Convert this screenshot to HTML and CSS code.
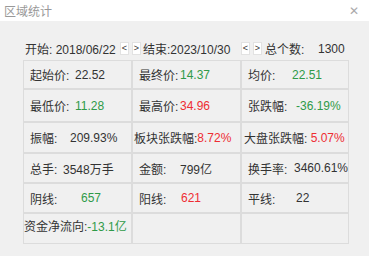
FILE: index.html
```html
<!DOCTYPE html>
<html lang="zh-CN">
<head>
    <meta charset="UTF-8">
    <title>区域统计</title>
    <link rel="stylesheet" href="styles.css">
</head>
<body>
    <div class="titlebar">
        <span class="title">区域统计</span>
        <span class="close">&#x2715;</span>
    </div>

    <div class="range">
        <span class="start">开始: 2018/06/22</span>
        <span class="btn">&lt;</span><span class="btn">&gt;</span>
        <span class="end">结束:2023/10/30</span>
        <span class="btn">&lt;</span><span class="btn">&gt;</span>
        <span class="count">总个数:</span>
        <span class="count-val">1300</span>
    </div>

    <div class="stats">
        <div class="cell"><span class="lbl w45">起始价:</span><span>22.52</span></div>
        <div class="cell"><span class="lbl w41">最终价:</span><span class="up">14.37</span></div>
        <div class="cell"><span class="lbl w44">均价:</span><span class="up">22.51</span></div>

        <div class="cell"><span class="lbl w45">最低价:</span><span class="up">11.28</span></div>
        <div class="cell"><span class="lbl w41">最高价:</span><span class="down">34.96</span></div>
        <div class="cell"><span class="lbl w48">张跌幅:</span><span class="up">-36.19%</span></div>

        <div class="cell"><span class="lbl w40">振幅:</span><span>209.93%</span></div>
        <div class="cell tight"><span class="lbl">板块张跌幅:</span><span class="down">8.72%</span></div>
        <div class="cell tight2"><span class="lbl">大盘张跌幅:</span><span class="down">&nbsp;5.07%</span></div>

        <div class="cell"><span class="lbl w33">总手:</span><span>3548万手</span></div>
        <div class="cell"><span class="lbl w41">金额:</span><span>799亿</span></div>
        <div class="cell"><span class="lbl w48">换手率:</span><span>3460.61%</span></div>

        <div class="cell"><span class="lbl w51">阴线:</span><span class="up">657</span></div>
        <div class="cell"><span class="lbl w42">阳线:</span><span class="down">621</span></div>
        <div class="cell"><span class="lbl w48">平线:</span><span>22</span></div>

        <div class="cell flow"><span class="lbl">资金净流向:</span><span class="up">-13.1亿</span></div>
        <div class="cell"></div>
        <div class="cell"></div>
    </div>
</body>
</html>
```

FILE: styles.css
```css
body {
    margin: 0;
    background: #f0f0f0;
    font-family: "Liberation Sans", "Noto Sans CJK SC", sans-serif;
    font-size: 12px;
    color: #333;
    width: 369px;
    height: 256px;
    overflow: hidden;
}

.titlebar {
    height: 21px;
    background: #fff;
    display: flex;
    align-items: center;
    justify-content: space-between;
    padding: 0 10px 0 4px;
}

.title {
    color: #999;
    font-size: 12px;
}

.close {
    color: #aaa;
    font-size: 12px;
}

.range {
    display: flex;
    align-items: center;
    height: 21px;
    margin-top: 17px;
    padding-left: 25px;
    white-space: nowrap;
}

.start {
    width: 95px;
}

.btn {
    width: 7px;
    height: 11px;
    background: #fff;
    border: 1px solid #e2e2e2;
    font-size: 9px;
    line-height: 11px;
    text-align: center;
    margin-right: 3px;
}

.end {
    width: 98px;
    margin-left: -1px;
}

.count {
    width: 53px;
}

.stats {
    margin: 1px 0 0 23px;
    width: 326px;
    display: grid;
    grid-template-columns: 109px 109px 108px;
    grid-template-rows: 29px 33px 31px 30px 30px 31px;
}

.cell {
    border: 1px solid #dcdcdc;
    display: flex;
    align-items: center;
    padding-left: 6px;
    white-space: nowrap;
    overflow: hidden;
}

.lbl {
    display: inline-block;
}

.w33 { width: 33px; }
.w40 { width: 40px; }
.w41 { width: 41px; }
.w42 { width: 42px; }
.w44 { width: 44px; }
.w45 { width: 45px; }
.w48 { width: 48px; }
.w51 { width: 51px; }

.tight {
    padding-left: 1px;
}

.tight2 {
    padding-left: 2px;
}

.flow {
    padding-left: 0;
    padding-bottom: 6px;
}

.up {
    color: #2f9a48;
}

.down {
    color: #ee2d33;
}
```
